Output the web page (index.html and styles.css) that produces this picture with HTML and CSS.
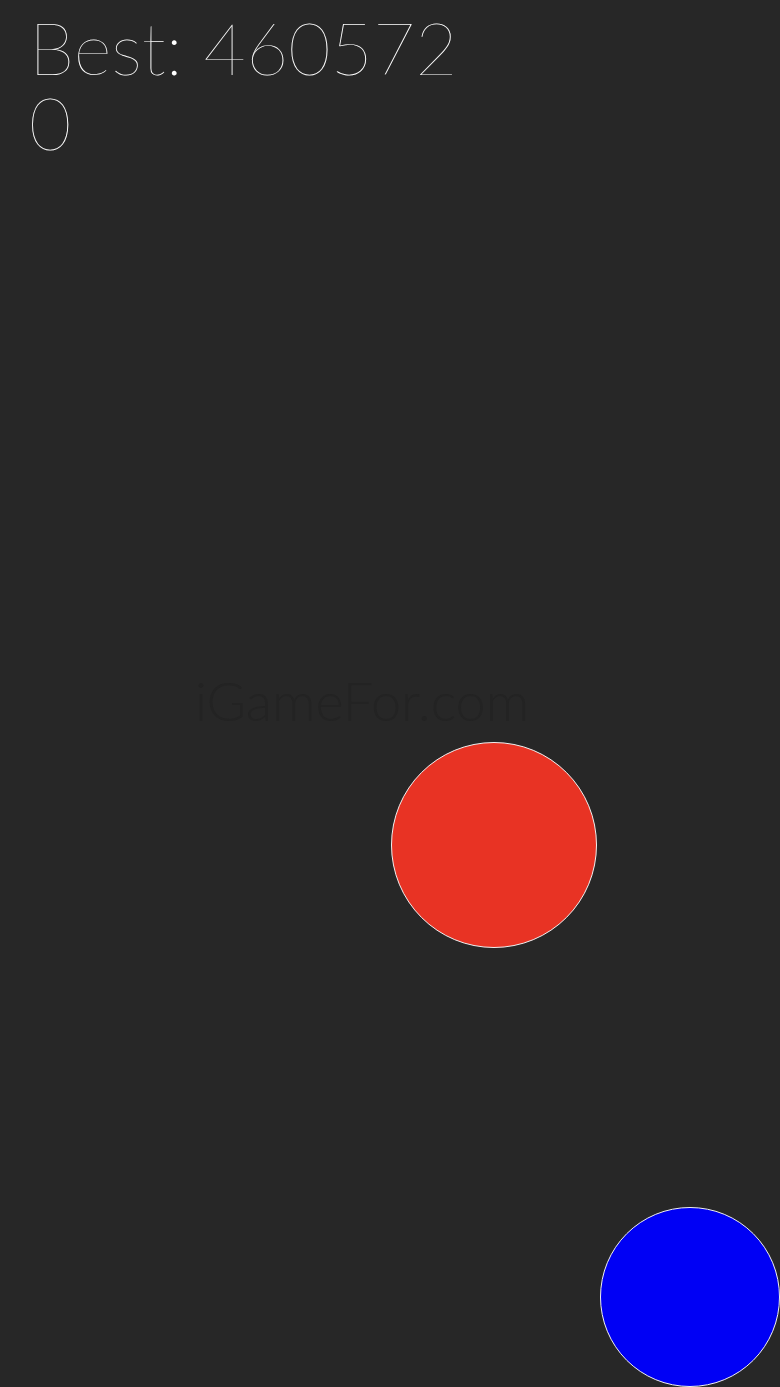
FILE: index.html
```html
<!DOCTYPE html>
<html>
<head>
<meta charset="utf-8">
<link rel="stylesheet" href="styles.css">
</head>
<body>
<div class="game">
  <div class="hud">
    <div class="best">Best: 460572</div>
    <div class="score">0</div>
  </div>
  <div class="watermark">iGameFor.com</div>
  <div class="ball red"></div>
  <div class="ball blue"></div>
</div>
</body>
</html>
```
FILE: styles.css
```css
html, body {
  margin: 0;
  padding: 0;
  background: #272727;
}
.game {
  position: relative;
  width: 780px;
  height: 1387px;
  overflow: hidden;
  background: #272727;
  font-family: "Lato", "Inter", "Liberation Sans", sans-serif;
}
.hud {
  padding: 10px 0 0 29px;
  color: #ffffff;
  font-weight: 100;
  font-size: 73px;
  line-height: 75px;
}
.watermark {
  position: absolute;
  left: 195px;
  top: 668px;
  font-size: 54px;
  color: #232323;
  font-weight: 300;
}
.ball {
  position: absolute;
  border-radius: 50%;
  border: 1px solid #f0f0f0;
  box-sizing: border-box;
}
.red {
  left: 391px;
  top: 742px;
  width: 206px;
  height: 206px;
  background: #e83324;
}
.blue {
  left: 600px;
  top: 1207px;
  width: 180px;
  height: 180px;
  background: #0000f5;
}
```
